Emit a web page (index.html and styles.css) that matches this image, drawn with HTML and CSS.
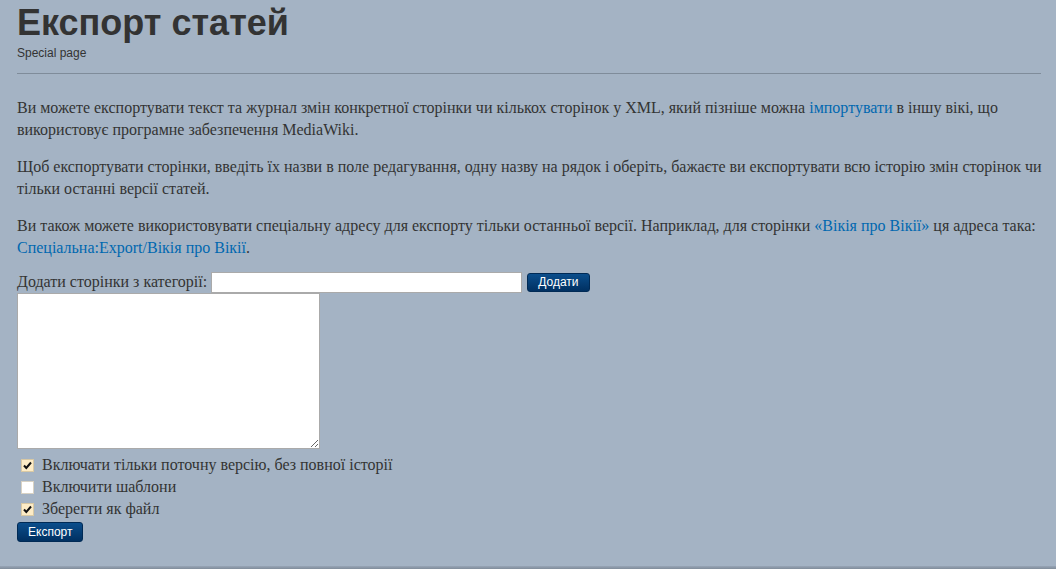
FILE: index.html
```html
<!DOCTYPE html>
<html lang="uk">
<head>
<meta charset="utf-8">
<title>Експорт статей</title>
<link rel="stylesheet" href="styles.css">
</head>
<body>
<div class="page">
  <header class="page-header">
    <h1 class="title">Експорт статей</h1>
    <div class="subtitle">Special page</div>
  </header>
  <div class="content">
    <p>Ви можете експортувати текст та журнал змін конкретної сторінки чи кількох сторінок у XML, який пізніше можна <a href="#">імпортувати</a> в іншу вікі, що використовує програмне забезпечення MediaWiki.</p>
    <p>Щоб експортувати сторінки, введіть їх назви в поле редагування, одну назву на рядок і оберіть, бажаєте ви експортувати всю історію змін сторінок чи тільки останні версії статей.</p>
    <p>Ви також можете використовувати спеціальну адресу для експорту тільки останньої версії. Наприклад, для сторінки <a href="#">«Вікія про Вікії»</a> ця адреса така: <a href="#">Спеціальна:Export/Вікія про Вікії</a>.</p>
    <form class="export-form">
      <div class="cat-row">
        <label class="cat-label">Додати сторінки з категорії:</label>
        <input class="cat-input" type="text">
        <button type="button" class="btn">Додати</button>
      </div>
      <textarea class="pages"></textarea>
      <label class="check-row"><span class="box checked"><svg viewBox="0 0 11 11" width="11" height="11"><path d="M2 5.5 L4.3 8 L9 2.5" fill="none" stroke="#111" stroke-width="2"/></svg></span>Включати тільки поточну версію, без повної історії</label>
      <label class="check-row"><span class="box"></span>Включити шаблони</label>
      <label class="check-row"><span class="box checked"><svg viewBox="0 0 11 11" width="11" height="11"><path d="M2 5.5 L4.3 8 L9 2.5" fill="none" stroke="#111" stroke-width="2"/></svg></span>Зберегти як файл</label>
      <button type="button" class="btn btn-export">Експорт</button>
    </form>
  </div>
</div>
<div class="footer-line"></div>
</body>
</html>
```

FILE: styles.css
```css
html, body {
  margin: 0;
  padding: 0;
  background: #a4b3c4;
  height: 100%;
}
body {
  color: #333;
  font-family: "Liberation Serif", "DejaVu Serif", serif;
  position: relative;
  overflow: hidden;
}
.page {
  padding: 0 15px 0 17px;
}
.page-header {
  border-bottom: 1px solid #7f8c9a;
  padding-bottom: 12px;
}
.title {
  margin: 0;
  padding-top: 1px;
  font-family: "Liberation Sans", Arial, sans-serif;
  font-weight: bold;
  font-size: 36px;
  line-height: 44px;
  color: #333;
}
.subtitle {
  font-family: "Liberation Sans", Arial, sans-serif;
  font-size: 12px;
  line-height: 16px;
  color: #333;
}
.content {
  padding-top: 23px;
  font-size: 16px;
  line-height: 22px;
}
.content p {
  margin: 0 -6px 15px 0;
}
a {
  color: #0068b0;
  text-decoration: none;
}
.export-form {
  display: flex;
  flex-direction: column;
  align-items: flex-start;
}
.cat-row {
  display: flex;
  align-items: center;
  height: 22px;
  margin-top: -3px;
}
.cat-label {
  margin-right: 4px;
}
.cat-input {
  width: 307px;
  height: 17px;
  border: 1px solid #aaa;
  background: #fff;
  padding: 1px;
  margin: 0 5px 0 0;
}
.btn {
  font-family: "Liberation Sans", Arial, sans-serif;
  font-size: 12px;
  color: #fff;
  background: linear-gradient(#0b4e8c, #003061);
  border: 1px solid #002a55;
  border-radius: 3px;
  padding: 0 10px;
  height: 19px;
  line-height: 17px;
  cursor: pointer;
}
.pages {
  width: 297px;
  height: 150px;
  border: 1px solid #aaa;
  background: #fff;
  margin: 0 0 5px;
  padding: 2px;
  resize: both;
}
.check-row {
  display: flex;
  align-items: center;
  height: 22px;
}
.box {
  box-sizing: border-box;
  display: flex;
  align-items: center;
  justify-content: center;
  width: 13px;
  height: 13px;
  margin: 0 8px 0 4px;
  background: #fff;
  border: 1px solid #d8d2c4;
}
.box.checked {
  background: #fdecc6;
  border-color: #d9c9a4;
}
.btn-export {
  margin-top: 2px;
  padding: 0 10px;
  height: 20px;
}
.footer-line {
  position: absolute;
  left: 0;
  right: 0;
  bottom: 0;
  height: 3px;
  background: linear-gradient(#97a5b6, #808c9a);
}
```
